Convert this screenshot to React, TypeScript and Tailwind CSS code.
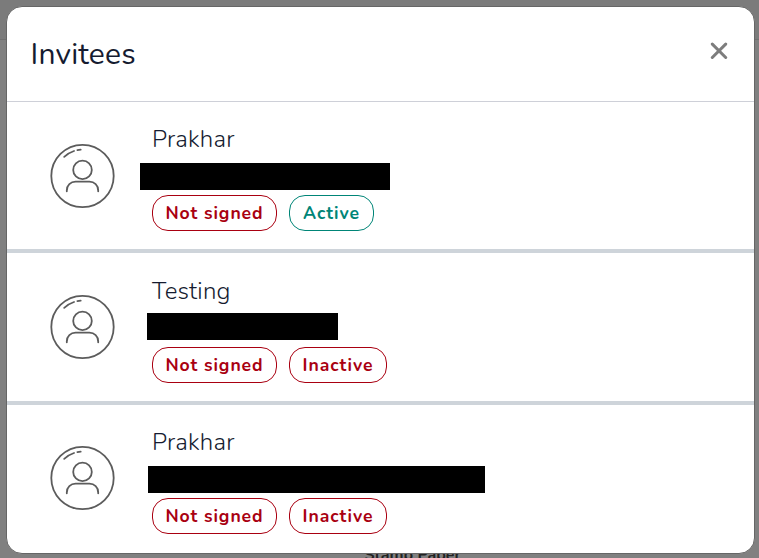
import React from 'react';
import clsx from 'clsx';

interface Invitee {
    name: string;
    active: boolean;
    rowClass: string;
    avatarClass: string;
    barClass: string;
}

const invitees: Invitee[] = [
    { name: 'Prakhar', active: true, rowClass: 'h-[151px] border-b-4 pt-[22px]', avatarClass: 'mt-[19px]', barClass: '-ml-3 mt-[9px] mb-[5px] w-[250px]' },
    { name: 'Testing', active: false, rowClass: 'h-[152px] border-b-4 pt-[23px]', avatarClass: 'mt-[18px]', barClass: '-ml-[5px] mt-[7px] mb-[7px] w-[191px]' },
    { name: 'Prakhar', active: false, rowClass: 'h-[147px] pt-[22px]', avatarClass: 'mt-[18px]', barClass: '-ml-1 mt-[9px] mb-[5px] w-[337px]' },
];

function Avatar({ className }: { className: string }) {
    return (
        <svg className={clsx('ml-[43px] h-[66px] w-[66px] shrink-0', className)} viewBox="0 0 66 66" fill="none" stroke="#5c5c5c" strokeWidth="1.8" strokeLinecap="round">
            <circle cx="32.5" cy="33" r="31.2" />
            <circle cx="32.5" cy="26.9" r="9.3" />
            <path d="M16.8 48.3v-.9c0-5.2 3.8-8.7 8.8-8.7h13.8c5 0 8.8 3.5 8.8 8.7v.9" />
            <path d="M14.2 13.8C17 11.3 20.4 9.2 24 8M27.4 7.2l3.3-.5" />
        </svg>
    );
}

function Pill({ label, className }: { label: string; className: string }) {
    return (
        <span className={clsx('flex h-9 items-center justify-center rounded-2xl border pt-0.5 text-[17.6px] leading-none font-bold tracking-[0.93px]', className)}>
            {label}
        </span>
    );
}

function InviteeRow({ name, active, rowClass, avatarClass, barClass }: Invitee) {
    return (
        <li className={clsx('flex border-[#ced4da]', rowClass)}>
            <Avatar className={avatarClass} />
            <div className="ml-9">
                <div className="h-[30px] text-[24px] leading-[30px] font-light tracking-[0.2px] text-[#151b30]">{name}</div>
                <div className={clsx('h-[27px] bg-black', barClass)} />
                <div className="flex gap-3">
                    <Pill label="Not signed" className="w-[125px] border-[#a90011] text-[#a90011]" />
                    {active
                        ? <Pill label="Active" className="w-[85px] border-[#008577] text-[#008577]" />
                        : <Pill label="Inactive" className="w-[98px] border-[#a90011] text-[#a90011]" />}
                </div>
            </div>
        </li>
    );
}

export default function App() {
    return (
        <div className="relative h-[558px] w-[759px] overflow-hidden bg-[#808080] font-[Nunito,Lato,sans-serif]">
            <div className="h-10 border-b border-[#707070] bg-[#7b7b7b]" />
            <div className="absolute top-[546px] left-[364.5px] text-[16px] leading-[18px] font-bold whitespace-nowrap text-[#222]">Stamp Paper</div>

            <div className="absolute top-1.5 left-1.5 h-[548px] w-[749px] overflow-hidden rounded-2xl border border-[#666] bg-white">
                <header className="flex h-[95px] items-center justify-between border-b border-[#ced0d8] pr-[26px] pl-[23.5px]">
                    <h1 className="mt-0.5 text-[30px] leading-none font-normal tracking-[0.2px] text-[#151b30]">Invitees</h1>
                    <button aria-label="Close" className="mb-1.5">
                        <svg className="h-[18px] w-[18px]" viewBox="0 0 18 18" fill="none" stroke="#7d7d7d" strokeWidth="3" strokeLinecap="round">
                            <path d="M2.3 2.1l13.4 13.4M15.7 2.1L2.3 15.5" />
                        </svg>
                    </button>
                </header>
                <ul>
                    {invitees.map((invitee, i) => <InviteeRow key={i} {...invitee} />)}
                </ul>
            </div>
        </div>
    );
}
